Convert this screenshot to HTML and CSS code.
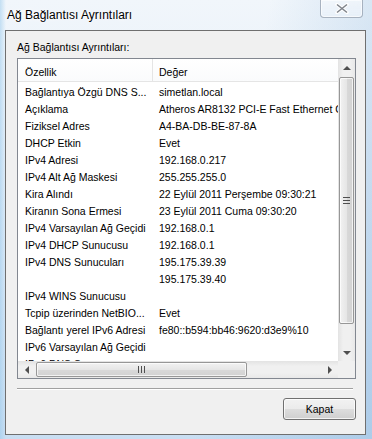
FILE: index.html
```html
<!DOCTYPE html>
<html lang="tr">
<head>
    <meta charset="UTF-8">
    <meta name="viewport" content="width=device-width, initial-scale=1.0">
    <title>Ağ Bağlantısı Ayrıntıları</title>
    <link rel="stylesheet" href="styles.css">
</head>
<body>
    <div class="window">
        <div class="titlebar">
            <span class="title">Ağ Bağlantısı Ayrıntıları</span>
            <button class="close-btn" aria-label="Kapat">
                <svg width="14" height="11" viewBox="0 0 14 11">
                    <path d="M2 1.5 L12 9.5 M12 1.5 L2 9.5" stroke="#fff" stroke-width="3.5" stroke-linecap="round"/>
                    <path d="M2 1.5 L12 9.5 M12 1.5 L2 9.5" stroke="#80858c" stroke-width="1.6"/>
                </svg>
            </button>
        </div>

        <div class="client">
            <div class="caption">Ağ Bağlantısı Ayrıntıları:</div>

            <div class="listview">
                <div class="list-main">
                    <div class="list-area">
                        <div class="list-header">
                            <div class="cell prop">Özellik</div>
                            <div class="cell val">Değer</div>
                        </div>
                        <div class="list-rows">
                            <div class="row"><div class="cell prop">Bağlantıya Özgü DNS S...</div><div class="cell val">simetlan.local</div></div>
                            <div class="row"><div class="cell prop">Açıklama</div><div class="cell val">Atheros AR8132 PCI-E Fast Ethernet Controller (NDIS 6.20)</div></div>
                            <div class="row"><div class="cell prop">Fiziksel Adres</div><div class="cell val">A4-BA-DB-BE-87-8A</div></div>
                            <div class="row"><div class="cell prop">DHCP Etkin</div><div class="cell val">Evet</div></div>
                            <div class="row"><div class="cell prop">IPv4 Adresi</div><div class="cell val">192.168.0.217</div></div>
                            <div class="row"><div class="cell prop">IPv4 Alt Ağ Maskesi</div><div class="cell val">255.255.255.0</div></div>
                            <div class="row"><div class="cell prop">Kira Alındı</div><div class="cell val">22 Eylül 2011 Perşembe 09:30:21</div></div>
                            <div class="row"><div class="cell prop">Kiranın Sona Ermesi</div><div class="cell val">23 Eylül 2011 Cuma 09:30:20</div></div>
                            <div class="row"><div class="cell prop">IPv4 Varsayılan Ağ Geçidi</div><div class="cell val">192.168.0.1</div></div>
                            <div class="row"><div class="cell prop">IPv4 DHCP Sunucusu</div><div class="cell val">192.168.0.1</div></div>
                            <div class="row"><div class="cell prop">IPv4 DNS Sunucuları</div><div class="cell val">195.175.39.39</div></div>
                            <div class="row"><div class="cell prop"></div><div class="cell val">195.175.39.40</div></div>
                            <div class="row"><div class="cell prop">IPv4 WINS Sunucusu</div><div class="cell val"></div></div>
                            <div class="row"><div class="cell prop">Tcpip üzerinden NetBIO...</div><div class="cell val">Evet</div></div>
                            <div class="row"><div class="cell prop">Bağlantı yerel IPv6 Adresi</div><div class="cell val">fe80::b594:bb46:9620:d3e9%10</div></div>
                            <div class="row"><div class="cell prop">IPv6 Varsayılan Ağ Geçidi</div><div class="cell val"></div></div>
                            <div class="row"><div class="cell prop">IPv6 DNS Sunucusu</div><div class="cell val"></div></div>
                        </div>
                    </div>

                    <div class="vscroll">
                        <div class="sb-btn"><span class="arrow up"></span></div>
                        <div class="sb-track v">
                            <div class="thumb v"><span class="grip v"></span></div>
                        </div>
                        <div class="sb-btn"><span class="arrow down"></span></div>
                    </div>
                </div>

                <div class="hscroll-row">
                    <div class="hscroll">
                        <div class="sb-btn"><span class="arrow left"></span></div>
                        <div class="sb-track h">
                            <div class="thumb h"><span class="grip h"></span></div>
                        </div>
                        <div class="sb-btn"><span class="arrow right"></span></div>
                    </div>
                    <div class="corner"></div>
                </div>
            </div>

            <div class="separator"></div>

            <div class="actions">
                <button class="btn">Kapat</button>
            </div>
        </div>
    </div>
</body>
</html>
```

FILE: styles.css
```css
body {
    margin: 0;
    width: 372px;
    height: 439px;
    overflow: hidden;
    font-family: "Liberation Sans", Arial, sans-serif;
    color: #000;
}

.window {
    height: 439px;
    display: flex;
    flex-direction: column;
    background:
        linear-gradient(100deg, rgba(255, 255, 255, 0) 60%, rgba(120, 170, 215, 0.35) 100%),
        linear-gradient(to right, rgba(150, 200, 235, 0.5) 0, rgba(150, 200, 235, 0) 6px),
        linear-gradient(to bottom, #f1f6fb 0%, #e2edf8 40%, #c9def2 100%);
}

/* title bar */
.titlebar {
    height: 30px;
    flex: none;
    display: flex;
    justify-content: space-between;
    align-items: flex-start;
    padding: 0 9px 0 7px;
}

.title {
    margin-top: 7px;
    font-size: 12px;
    line-height: 16px;
    text-shadow: 0 0 6px #fff, 0 0 3px #fff;
}

.close-btn {
    width: 43px;
    height: 18px;
    padding: 0;
    display: flex;
    align-items: center;
    justify-content: center;
    border: 1px solid rgba(110, 125, 145, 0.55);
    border-top: none;
    border-radius: 0 0 4px 4px;
    background: linear-gradient(to bottom, rgba(255, 255, 255, 0.55), rgba(235, 242, 250, 0.75));
    box-shadow: inset 0 0 0 1px rgba(255, 255, 255, 0.6);
}

/* client area */
.client {
    flex: 1;
    margin: 0 6px 4px 5px;
    border: 1px solid #6f6f6f;
    background-color: #f0f0f0;
    padding: 10px 9px 0 11px;
    font-size: 10.5px;
}

.caption {
    line-height: 13px;
    margin-bottom: 4px;
}

/* list view */
.listview {
    height: 321px;
    box-sizing: border-box;
    border: 1px solid #828790;
    background-color: #fff;
    display: flex;
    flex-direction: column;
}

.list-main {
    flex: 1;
    display: flex;
    min-height: 0;
}

.list-area {
    flex: 1;
    overflow: hidden;
}

.list-header {
    display: flex;
    height: 23px;
    box-sizing: border-box;
    border-bottom: 1px solid #e5e5e5;
    background: linear-gradient(to bottom, #fff, #fafbfc);
}

.list-header .cell {
    padding-top: 4px;
    line-height: 18px;
    padding-left: 6px;
}

.list-header .prop {
    border-right: 1px solid #e5e5e5;
}

.list-rows {
    padding-top: 2px;
}

.row {
    display: flex;
    height: 17px;
    line-height: 17px;
}

.cell {
    white-space: nowrap;
    overflow: hidden;
    box-sizing: border-box;
}

.cell.prop {
    width: 135px;
    flex: none;
    padding-left: 7px;
}

.cell.val {
    width: 310px;
    flex: none;
    padding-left: 6px;
}

/* scroll bars */
.vscroll {
    width: 17px;
    flex: none;
    display: flex;
    flex-direction: column;
    background: linear-gradient(to right, #e3e3e3, #f0f0f0 30%, #f0f0f0 70%, #e8e8e8);
}

.hscroll-row {
    height: 17px;
    flex: none;
    display: flex;
}

.hscroll {
    flex: 1;
    display: flex;
    background: linear-gradient(to bottom, #e3e3e3, #f0f0f0 30%, #f0f0f0 70%, #e8e8e8);
}

.corner {
    width: 17px;
    background-color: #f0f0f0;
}

.sb-btn {
    width: 17px;
    height: 17px;
    flex: none;
    display: flex;
    align-items: center;
    justify-content: center;
}

.sb-track {
    flex: 1;
    display: flex;
}

.sb-track.v {
    flex-direction: column;
    padding: 1px 0;
}

.sb-track.h {
    padding: 0 1px;
}

.thumb {
    display: flex;
    align-items: center;
    justify-content: center;
    box-sizing: border-box;
    border: 1px solid #979797;
    border-radius: 2px;
}

.thumb.v {
    margin: 0 1px;
    height: 247px;
    background: linear-gradient(to right, #f2f2f2, #e6e6e6 50%, #d9d9d9 51%, #d2d2d2);
    box-shadow: inset 0 0 0 1px rgba(255, 255, 255, 0.7);
}

.thumb.h {
    margin: 1px 0;
    width: 211px;
    background: linear-gradient(to bottom, #f2f2f2, #e6e6e6 50%, #d9d9d9 51%, #d2d2d2);
    box-shadow: inset 0 0 0 1px rgba(255, 255, 255, 0.7);
}

.grip.v {
    width: 7px;
    height: 5px;
    border-top: 1px solid #4f4f4f;
    border-bottom: 1px solid #4f4f4f;
    background: linear-gradient(to bottom, transparent 40%, #4f4f4f 40%, #4f4f4f 60%, transparent 60%);
}

.grip.h {
    width: 5px;
    height: 7px;
    border-left: 1px solid #4f4f4f;
    border-right: 1px solid #4f4f4f;
    background: linear-gradient(to right, transparent 40%, #4f4f4f 40%, #4f4f4f 60%, transparent 60%);
}

.arrow {
    width: 0;
    height: 0;
    border: 4px solid transparent;
}

.arrow.up {
    border-bottom-color: #4f4f4f;
    border-top-width: 0;
}

.arrow.down {
    border-top-color: #4f4f4f;
    border-bottom-width: 0;
}

.arrow.left {
    border-right-color: #4f4f4f;
    border-left-width: 0;
}

.arrow.right {
    border-left-color: #4f4f4f;
    border-right-width: 0;
}

/* footer */
.separator {
    margin: 9px 3px 0 0;
    height: 0;
    border-top: 1px solid #a0a0a0;
    border-bottom: 1px solid #fff;
}

.actions {
    display: flex;
    justify-content: flex-end;
    margin-top: 8px;
}

.btn {
    width: 73px;
    height: 22px;
    padding: 0;
    font-family: "Liberation Sans", Arial, sans-serif;
    font-size: 10.5px;
    color: #000;
    border: 1px solid #707070;
    border-radius: 3px;
    background: linear-gradient(to bottom, #f2f2f2 0%, #ebebeb 50%, #dddddd 51%, #cfcfcf 100%);
    box-shadow: inset 0 0 0 1px rgba(255, 255, 255, 0.75);
}
```
